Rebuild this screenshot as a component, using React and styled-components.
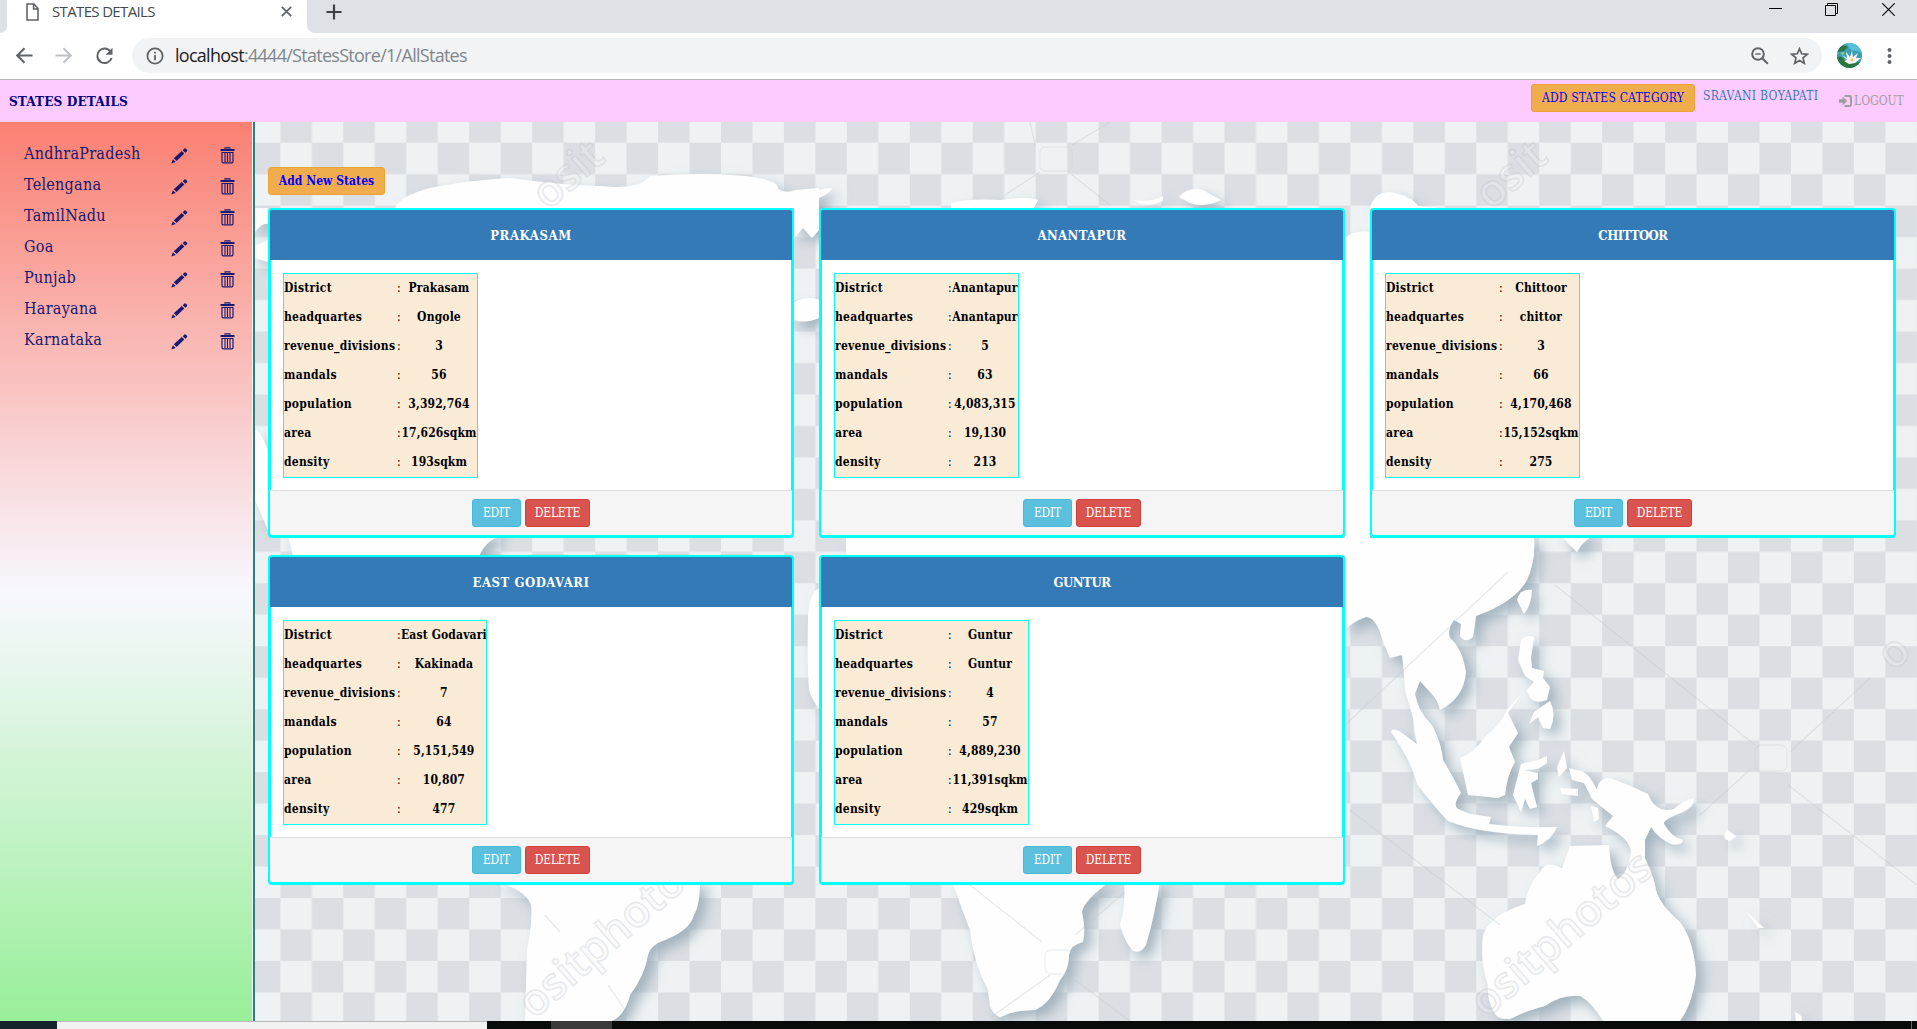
import React from "react";
import styled, { createGlobalStyle } from "styled-components";

const SERIF = '"DejaVu Serif Condensed", "DejaVu Serif", serif';
const SANS = '"Open Sans", "Noto Sans", sans-serif';

const GlobalStyle = createGlobalStyle`
  * { box-sizing: border-box; }
  html, body { margin: 0; padding: 0; overflow: hidden; }
  body { font-family: ${SERIF}; background: #fff; }
  button { font-family: inherit; cursor: pointer; }
`;

const Screen = styled.div`
  display: flex;
  flex-direction: column;
  width: 1917px;
  height: 1029px;
  overflow: hidden;
`;

/* Browser window */
const TabStrip = styled.div`
  display: flex;
  height: 33px;
  background: #fff;
`;
const StripStart = styled.div`
  width: 7px;
  background: #dee1e6;
  border-bottom-right-radius: 7px;
`;
const Tab = styled.div`
  width: 300px;
  height: 23px;
  display: flex;
  align-items: center;
  padding: 0 15px 0 19px;
  font-family: ${SANS};
`;
const TabTitle = styled.span`
  flex: 1;
  margin-left: 13px;
  padding-bottom: 2px;
  font-size: 15px;
  letter-spacing: -0.65px;
  color: #45494d;
  white-space: nowrap;
`;
const StripEnd = styled.div`
  flex: 1;
  display: flex;
  justify-content: space-between;
  background: #dee1e6;
  border-bottom-left-radius: 8px;
  padding: 3px 22px 0 19px;
`;
const WindowButtons = styled.div`
  display: flex;
  gap: 43px;
`;
const Toolbar = styled.div`
  display: flex;
  align-items: center;
  height: 47px;
  padding: 0 0 1px 15px;
  border-bottom: 1px solid #b6b8b6;
  background: #fff;
`;
const NavButtons = styled.div`
  display: flex;
  align-items: center;
  gap: 22px;
  width: 117px;
`;
const AddressBar = styled.div`
  display: flex;
  align-items: center;
  width: 1690px;
  height: 35px;
  padding: 0 13px 0 14px;
  border-radius: 18px;
  background: #f1f3f4;
`;
const Url = styled.div`
  flex: 1;
  margin-left: 11px;
  padding-bottom: 2px;
  font-family: ${SANS};
  font-size: 18px;
  letter-spacing: -0.72px;
  color: #80868b;
  white-space: nowrap;
`;
const Host = styled.span`
  color: #202124;
`;
const BarIcons = styled.div`
  display: flex;
  gap: 21px;
`;
const Profile = styled.div`
  display: flex;
  align-items: center;
  gap: 25px;
  margin-left: 15px;
`;

/* Page header */
const Header = styled.header`
  display: flex;
  justify-content: space-between;
  height: 42px;
  padding: 0 10px 0 9px;
  background: #fdcbff;
`;
const Brand = styled.div`
  align-self: center;
  font-size: 13.5px;
  font-weight: bold;
  letter-spacing: 0.1px;
  color: #000080;
  white-space: nowrap;
`;
const HeaderActions = styled.div`
  display: flex;
  align-items: flex-start;
`;
const UserName = styled.a`
  margin: 8px 0 0 8px;
  width: 136px;
  font-size: 12px;
  line-height: 17px;
  letter-spacing: 0.3px;
  color: #337ab7;
  white-space: nowrap;
`;
const Logout = styled.a`
  display: flex;
  align-items: center;
  gap: 2px;
  margin-top: 12px;
  width: 68px;
  font-size: 12px;
  line-height: 18px;
  letter-spacing: 0;
  color: #9d9d9d;
  white-space: nowrap;
`;

const TONES = {
  warning: ["#f0ad4e", "#eea236", "#0000ff"],
  info: ["#5bc0de", "#46b8da", "#ffffff"],
  danger: ["#d9534f", "#d43f3a", "#ffffff"],
};
const Button = styled.button`
  width: ${(p) => p.$width}px;
  height: 28px;
  padding: 0;
  border: 1px solid ${(p) => TONES[p.$tone][1]};
  border-radius: 3px;
  background: ${(p) => TONES[p.$tone][0]};
  color: ${(p) => TONES[p.$tone][2]};
  font-size: 12px;
  font-weight: ${(p) => (p.$bold ? "bold" : "normal")};
  letter-spacing: ${(p) => p.$spacing || 0}px;
  line-height: 18px;
  white-space: nowrap;
`;
const HeaderButton = styled(Button)`
  margin-top: 4px;
`;

/* Page body */
const Page = styled.div`
  display: flex;
  height: 899px;
  overflow: hidden;
`;
const Sidebar = styled.nav`
  width: 252px;
  height: 938px;
  flex: none;
  padding: 18px 17px 0 24px;
  background: linear-gradient(#fa8072, #f8f8ff, #90ee90);
`;
const SidebarRow = styled.div`
  display: grid;
  grid-template-columns: 147px 49px 15px;
  align-items: center;
  height: 31px;
  color: #191970;
`;
const StateName = styled.a`
  font-size: 16px;
  line-height: 24px;
  letter-spacing: 0.27px;
  padding-bottom: 4px;
`;
const Divider = styled.div`
  flex: none;
  width: 3px;
  height: 100%;
  border-left: 1px solid #f3f3f3;
  background: #2a807a;
`;
const Main = styled.main`
  position: relative;
  flex: 1;
  padding: 45px 0 0 13px;
`;
const MapBackdrop = styled.svg`
  position: absolute;
  inset: 0;
  width: 1662px;
  height: 899px;
`;
const Content = styled.div`
  position: relative;
`;
const Cards = styled.div`
  display: grid;
  grid-template-columns: repeat(3, 526px);
  gap: 17px 25px;
  margin-top: 13px;
`;
const Card = styled.section`
  height: 330px;
  border: 3px solid #00ffff;
  border-top-width: 2px;
  border-radius: 4px;
  background: #fff;
  display: flex;
  flex-direction: column;
`;
const CardHeader = styled.h3`
  display: flex;
  align-items: center;
  justify-content: center;
  height: 50px;
  margin: 0 -1px;
  padding-top: 1px;
  border-radius: 2px 2px 0 0;
  background: #337ab7;
  color: #fff;
  font-size: 13px;
  font-weight: bold;
  letter-spacing: ${(p) => p.$spacing}px;
`;
const CardBody = styled.div`
  flex: 1;
  padding: 13px 12px 0;
`;
const CardFooter = styled.div`
  display: flex;
  justify-content: center;
  gap: 4px;
  height: 45px;
  margin: 0 -1px;
  padding-top: 8px;
  border-top: 1px solid #ddd;
  border-radius: 0 0 2px 2px;
  background: #f5f5f5;
`;
const Facts = styled.dl`
  display: grid;
  grid-template-columns: 113px 4px 1fr;
  grid-auto-rows: 29px;
  width: ${(p) => p.$width}px;
  margin: 0;
  border: 1px solid #00ffff;
  background: #faebd7;
  color: #000;
  font-size: 12px;
  line-height: 29px;
  white-space: nowrap;
`;
const Term = styled.dt`
  font-weight: bold;
  letter-spacing: 0.25px;
`;
const Colon = styled.span``;
const Value = styled.dd`
  display: flex;
  justify-content: center;
  margin: 0;
  font-weight: bold;
  letter-spacing: 0.13px;
`;

/* Taskbar edge */
const Taskbar = styled.div`
  display: flex;
  height: 8px;
  background: #090a0a;
`;
const TaskSegment = styled.div`
  width: ${(p) => p.$width}px;
  background: ${(p) => p.$color};
  border-top: 1px solid ${(p) => p.$edge || p.$color};
`;

const Stroke = ({ w, h, vb, color = "#5f6368", sw = 2, children }) => (
  <svg width={w} height={h} viewBox={vb || `0 0 ${w} ${h}`} fill="none" stroke={color} strokeWidth={sw}>
    {children}
  </svg>
);

const Pencil = () => (
  <svg width="17" height="16" viewBox="0 0 17 16" fill="currentColor">
    <path d="M0.3 15.6 1.9 11.2 4.7 14Z M2.8 10.3 10.8 3 13.3 5.5 5.6 13Z M11.7 2.2 13.4.5Q14.2 0 15 .7L16 1.8Q16.6 2.6 16 3.3L14.4 4.8Z" />
  </svg>
);
const Trash = () => (
  <svg width="15" height="17" viewBox="0 0 15 17" fill="none" stroke="currentColor">
    <path d="M5 1.8V.9H10V1.8" strokeWidth="1.2" />
    <path d="M.5 3H14.5" strokeWidth="2" />
    <path d="M2 5.5H13V14.5Q13 15.8 11.8 15.8H3.2Q2 15.8 2 14.5Z" strokeWidth="1.2" />
    <path d="M5 6V15M7.5 6V15M10 6V15" strokeWidth="1.1" />
  </svg>
);
const LogoutIcon = () => (
  <svg width="13" height="12" viewBox="0 0 13 12">
    <path d="M0 4.2H3.6V1.5L8.2 6 3.6 10.5V7.8H0Z" fill="#9d9d9d" />
    <path d="M5.5 1H10.4Q12 1 12 2.5V9.3Q12 11 10.4 11H5.5" fill="none" stroke="#9d9d9d" strokeWidth="1.9" />
  </svg>
);

const Land = [
  // Greenland and the Arctic
  "M255 232Q262 222 268 224V208H395Q400 196 430 188Q470 180 510 178Q560 185 600 186Q640 190 650 176Q700 172 745 176Q780 180 778 189Q786 194 796 190L819 188V230L812 238L803 228L794 238V208H255Z",
  "M255 246L268 240V262L255 258Z",
  "M800 197Q818 188 832 188Q830 194 812 201L800 207Z",
  "M794 302Q810 295 819 300V318Q806 324 794 320Z",
  "M951 203Q970 198 1000 200Q1030 196 1038 200L1034 208H951Z",
  "M1135 200Q1150 203 1163 196V201Q1150 207 1138 203Z",
  "M1179 197Q1188 186 1203 190L1221 200Q1205 208 1190 203Z",
  "M1370 208Q1374 192 1390 192Q1412 196 1418 206L1440 208Z",
  // North America
  "M255 430Q260 430 268 450V530L255 500Z",
  "M285 530Q292 545 293 560H478Q482 545 495 538L500 530Z",
  // Asia
  "M1345 238Q1355 230 1370 232V538H1534Q1536 560 1527 580Q1515 602 1476 616Q1474 632 1473 637Q1466 644 1460 636L1461 624L1454 620Q1447 630 1450 638Q1462 648 1466 672Q1464 698 1440 710Q1438 700 1430 692L1420 681L1415 694Q1418 712 1432 725Q1442 745 1443 760Q1455 780 1461 793Q1452 805 1458 809L1470 814L1491 817L1489 824Q1520 828 1557 827Q1552 840 1537 846L1538 835Q1480 834 1448 821Q1435 808 1417 784Q1412 762 1391 732Q1392 726 1402 733L1417 744Q1415 735 1413 718L1405 690Q1404 670 1402 655L1390 658Q1382 640 1380 632Q1374 617 1366 617Q1352 622 1345 630Z",
  "M846 538H1345V556H846Z",
  // Taiwan and the Philippines
  "M1517 600Q1520 588 1532 590Q1531 606 1524 614Z",
  "M1521 640Q1527 634 1534 637L1531 658L1532 668L1544 671L1543 678L1550 687L1547 700Q1530 706 1527 690L1534 682L1525 676L1518 660Z",
  "M1534 712L1550 701Q1557 715 1550 729L1543 728L1538 717L1529 724Z",
  // Borneo, Sulawesi, Moluccas
  "M1460 758Q1475 752 1484 738Q1500 725 1507 710L1522 693L1508 713L1518 733L1509 747L1515 762Q1507 775 1505 795L1498 798L1468 795Z",
  "M1521 764L1538 760L1547 756L1547 763L1538 769L1523 770L1538 773V779L1531 783L1537 807L1530 809L1525 799L1521 812L1513 795Z",
  "M1557 767L1564 751L1567 768L1559 777Z",
  "M1560 788L1578 789L1578 796L1562 794Z",
  "M1591 806L1598 808L1599 819L1594 822Z",
  // New Guinea and Australia
  "M1569 768L1576 770Q1588 770 1597 790Q1598 778 1610 778Q1630 785 1648 794Q1656 814 1674 809Q1684 800 1694 798Q1695 806 1683 812Q1662 820 1664 824Q1672 838 1683 840Q1682 846 1671 844Q1658 838 1651 827L1645 840L1645 858Q1655 880 1656 890Q1660 905 1680 922Q1694 940 1696 975Q1692 1005 1680 1021H1603Q1592 1002 1580 996Q1562 994 1545 1006Q1528 1010 1510 1019Q1497 1020 1494 1012Q1487 1000 1488 985Q1480 965 1483 935Q1490 915 1525 904Q1528 885 1540 872Q1545 860 1562 868L1570 846L1609 845Q1610 870 1618 879Q1628 873 1631 852Q1630 838 1605 826L1613 816L1592 799L1584 783L1572 780Z",
  // Japan and the Pacific islands
  "M1558 530Q1566 542 1577 552Q1582 542 1594 535Z",
  "M1724 834L1728 830L1736 836L1730 841L1725 839Z",
  "M1746 911L1764 928L1758 928Z",
  "M1795 1012Q1803 1015 1802 1021H1796Z",
  // South America
  "M490 880Q525 888 531 905Q533 918 527 950L525 1021H612Q625 1015 630 995Q645 975 648 955Q650 945 665 940Q690 930 694 915Q700 905 700 880Z",
  // Africa and Madagascar
  "M819 588Q808 595 808 620Q807 660 809 690Q812 700 819 708Z",
  "M952 880Q960 905 970 930Q974 965 988 990L990 1006Q996 1020 1003 1016Q1015 1010 1035 1010Q1050 1004 1060 980Q1069 970 1069 955Q1070 945 1083 942Q1086 930 1082 912Q1084 900 1112 880Z",
  "M1124 880Q1126 905 1120 925Q1124 940 1132 950Q1140 955 1146 945Q1155 915 1160 880Z",
];

const Watermark = ({ x, y, children }) => (
  <text
    transform={`translate(${x} ${y}) rotate(-41)`}
    fontFamily='"Open Sans", sans-serif'
    fontSize="44"
    fontWeight="600"
    fill="#f4f5f6"
    fillOpacity="0.25"
    stroke="#b4bac1"
    strokeOpacity="0.3"
    strokeWidth="1.6"
  >
    {children}
  </text>
);

const WorldMap = () => (
  <MapBackdrop viewBox="255 122 1662 899" aria-hidden="true">
    <defs>
      <pattern id="checks" x="280.4" y="142.7" width="62.94" height="62.94" patternUnits="userSpaceOnUse">
        <rect width="62.94" height="62.94" fill="#eef2f4" />
        <rect x="31.47" width="31.47" height="31.47" fill="#dbdfe4" />
        <rect y="31.47" width="31.47" height="31.47" fill="#dbdfe4" />
      </pattern>
      <filter id="relief" x="-5%" y="-5%" width="115%" height="115%">
        <feDropShadow dx="7" dy="7" stdDeviation="6.5" floodColor="#93a6b3" floodOpacity="0.8" />
      </filter>
    </defs>
    <rect x="255" y="122" width="1662" height="899" fill="url(#checks)" />
    <g filter="url(#relief)">
      {Land.map((d) => (
        <path key={d} d={d} fill="#fefefe" />
      ))}
    </g>
    <g stroke="#c3c8cd" strokeOpacity="0.4" strokeWidth="1.3" fill="none">
      <path d="M1345 725 1508 572M1555 585 1755 745M1788 785 1917 885M1350 810 1500 925M1700 815 1752 768M1790 752 1870 678" />
      <path d="M970 885 1042 942M1075 980 1130 1021M1050 975 990 1018M1075 935 1125 892M545 915 560 932M608 985 625 1010" />
      <rect x="1755" y="745" width="32" height="26" rx="6" strokeOpacity="0.25" />
      <rect x="1045" y="950" width="28" height="24" rx="6" strokeOpacity="0.25" />
      <rect x="1040" y="147" width="32" height="24" rx="5" strokeOpacity="0.25" />
      <path d="M1072 145 1110 122M1035 145 1030 122M1005 195 1040 172M1072 175 1110 205" />
    </g>
    <Watermark x={534} y={1020}>ositphotos</Watermark>
    <Watermark x={1486} y={1019}>ositphotos</Watermark>
    <Watermark x={548} y={211}>osit</Watermark>
    <Watermark x={1491} y={211}>osit</Watermark>
    <Watermark x={1893} y={672}>o</Watermark>
  </MapBackdrop>
);

const STATES = ["AndhraPradesh", "Telengana", "TamilNadu", "Goa", "Punjab", "Harayana", "Karnataka"];
const FIELDS = ["District", "headquartes", "revenue_divisions", "mandals", "population", "area", "density"];
const DISTRICTS = [
  { title: "PRAKASAM", spacing: 0.6, width: 195, values: ["Prakasam", "Ongole", "3", "56", "3,392,764", "17,626sqkm", "193sqkm"] },
  { title: "ANANTAPUR", spacing: 0.4, width: 185, values: ["Anantapur", "Anantapur", "5", "63", "4,083,315", "19,130", "213"] },
  { title: "CHITTOOR", spacing: -0.45, width: 195, values: ["Chittoor", "chittor", "3", "66", "4,170,468", "15,152sqkm", "275"] },
  { title: "EAST GODAVARI", spacing: 0.55, width: 204, values: ["East Godavari", "Kakinada", "7", "64", "5,151,549", "10,807", "477"] },
  { title: "GUNTUR", spacing: -0.4, width: 195, values: ["Guntur", "Guntur", "4", "57", "4,889,230", "11,391sqkm", "429sqkm"] },
];

const DistrictCard = ({ title, spacing, width, values }) => (
  <Card>
    <CardHeader $spacing={spacing}>{title}</CardHeader>
    <CardBody>
      <Facts $width={width}>
        {FIELDS.map((field, i) => (
          <React.Fragment key={field}>
            <Term>{field}</Term>
            <Colon>:</Colon>
            <Value>{values[i]}</Value>
          </React.Fragment>
        ))}
      </Facts>
    </CardBody>
    <CardFooter>
      <Button $tone="info" $width={49} $spacing={-0.2}>EDIT</Button>
      <Button $tone="danger" $width={65} $spacing={-0.2}>DELETE</Button>
    </CardFooter>
  </Card>
);

const BrowserChrome = () => (
  <>
    <TabStrip>
      <StripStart />
      <Tab>
        <Stroke w={13} h={18} sw={1.6}>
          <path d="M1 1H8L12 5.5V17H1ZM7.6 1V6H12" />
        </Stroke>
        <TabTitle>STATES DETAILS</TabTitle>
        <Stroke w={11} h={11} sw={1.7}>
          <path d="M.8.8 10.2 10.2M10.2.8.8 10.2" />
        </Stroke>
      </Tab>
      <StripEnd>
        <Stroke w={16} h={18} sw={2.2} color="#3c4043">
          <path d="M8 1.5V16.5M.5 9H15.5" />
        </Stroke>
        <WindowButtons>
          <Stroke w={13} h={13} sw={1} color="#000"><path d="M0 5.5H13" /></Stroke>
          <Stroke w={14} h={13} sw={1} color="#000"><path d="M.5 2.5H10.5V12.5H.5ZM2.5 2.5V.5H12.5V10.5H10.5" /></Stroke>
          <Stroke w={13} h={13} sw={1.1} color="#000"><path d="M.3.3 12.7 12.7M12.7.3.3 12.7" /></Stroke>
        </WindowButtons>
      </StripEnd>
    </TabStrip>
    <Toolbar>
      <NavButtons>
        <Stroke w={18} h={17}><path d="M17.5 8.5H2.5M9.5 1.3 2.2 8.5 9.5 15.7" /></Stroke>
        <Stroke w={18} h={17} color="#bdc1c6"><path d="M.5 8.5H15.5M8.5 1.3 15.8 8.5 8.5 15.7" /></Stroke>
        <Stroke w={19} h={18}>
          <path d="M15.5 4.4A7.3 7.3 0 1 0 16.6 11" />
          <path d="M17.5.8V7.8H10.5Z" fill="#5f6368" stroke="none" />
        </Stroke>
      </NavButtons>
      <AddressBar>
        <Stroke w={18} h={18} sw={1.8}>
          <circle cx="9" cy="9" r="7.6" />
          <path d="M9 8V13.2M9 4.8V6.6" />
        </Stroke>
        <Url><Host>localhost</Host>:4444/StatesStore/1/AllStates</Url>
        <BarIcons>
          <Stroke w={18} h={18}>
            <circle cx="7" cy="7" r="5.8" />
            <path d="M11.2 11.2 16.8 16.8" /><path d="M4.3 7H9.7" strokeWidth="1.4" />
          </Stroke>
          <Stroke w={19} h={18} sw={1.7}>
            <path d="M9.5 1.8 11.7 6.8 17.2 7.3 13 10.9 14.3 16.3 9.5 13.4 4.7 16.3 6 10.9 1.8 7.3 7.3 6.8Z" />
          </Stroke>
        </BarIcons>
      </AddressBar>
      <Profile>
        <svg width="25" height="25" viewBox="0 0 25 25">
          <defs><clipPath id="face"><circle cx="12.5" cy="12.5" r="12.5" /></clipPath></defs>
          <g clipPath="url(#face)">
            <rect width="25" height="25" fill="#3b9fb5" />
            <path d="M9 0H25V9L14 7Z" fill="#57bfd8" />
            <path d="M0 5Q6 1 11 4L7 8 0 9ZM0 14Q5 12 8 18L14 21 25 18V25H0Z" fill="#2d7440" />
            <path d="M3 10 8 9 6 12Z" fill="#8ecf8f" />
            <path d="M5 12 10 15 9 9 13 14 15 8 16 14 21 10 19 15 24 15 18 20 12 21 7 18 10 17Z" fill="#f7f2f5" />
            <circle cx="15" cy="17" r="1.4" fill="#ecc94c" />
          </g>
        </svg>
        <svg width="5" height="18" viewBox="0 0 5 18" fill="#5f6368">
          <circle cx="2.5" cy="3" r="2" /><circle cx="2.5" cy="9" r="2" /><circle cx="2.5" cy="15" r="2" />
        </svg>
      </Profile>
    </Toolbar>
  </>
);

export default function App() {
  return (
    <Screen>
      <GlobalStyle />
      <BrowserChrome />
      <Header>
        <Brand>STATES DETAILS</Brand>
        <HeaderActions>
          <HeaderButton $tone="warning" $width={164} $spacing={0.2}>ADD STATES CATEGORY</HeaderButton>
          <UserName>SRAVANI BOYAPATI</UserName>
          <Logout><LogoutIcon />LOGOUT</Logout>
        </HeaderActions>
      </Header>
      <Page>
        <Sidebar>
          {STATES.map((name) => (
            <SidebarRow key={name}>
              <StateName>{name}</StateName>
              <Pencil />
              <Trash />
            </SidebarRow>
          ))}
        </Sidebar>
        <Divider />
        <Main>
          <WorldMap />
          <Content>
            <Button $tone="warning" $width={117} $bold $spacing={0.05}>Add New States</Button>
            <Cards>
              {DISTRICTS.map((district) => (
                <DistrictCard key={district.title} {...district} />
              ))}
            </Cards>
          </Content>
        </Main>
      </Page>
      <Taskbar>
        <TaskSegment $width={57} $color="#14232c" />
        <TaskSegment $width={430} $color="#f2f2f2" $edge="#b8b8b8" />
        <TaskSegment $width={64} $color="#090a0a" />
        <TaskSegment $width={61} $color="#3b3b3b" />
        <TaskSegment $width={1299} $color="#090a0a" />
        <TaskSegment $width={1} $color="#666666" />
      </Taskbar>
    </Screen>
  );
}
